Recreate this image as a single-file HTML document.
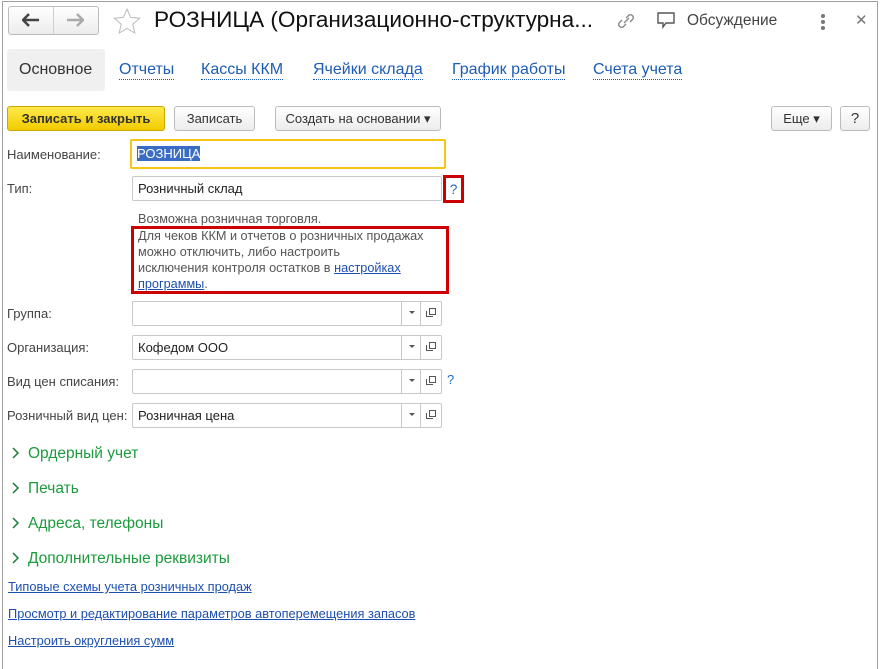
<!DOCTYPE html>
<html style="width:880px;height:669px;overflow:hidden"><head><meta charset="utf-8"><style>
*{box-sizing:border-box;margin:0;padding:0}
body{width:880px;height:669px;background:#fff;font-family:"Liberation Sans",Arial,sans-serif;position:relative;overflow:hidden;color:#333}
.frame{position:absolute;left:2px;top:1px;width:876px;height:690px;border:1px solid #a0a0a0}
.abs{position:absolute}
.btn{position:absolute;border:1px solid #bcbcbc;border-radius:3px;background:linear-gradient(#fff,#ececec);font-size:13px;color:#333;text-align:center;line-height:23px;height:25px}
.lbl{position:absolute;left:7px;font-size:13px;color:#444}
.inp{position:absolute;left:132px;width:310px;height:25px;border:1px solid #c8c8c8;border-radius:2px;background:#fff;font-size:13px;line-height:23px;padding-left:5px;color:#222}
.dd{position:absolute;top:-1px;right:20px;width:20px;height:25px;border-left:1px solid #c8c8c8}
.dd:after{content:"";position:absolute;left:7px;top:10px;border:3px solid transparent;border-top:3px solid #555}
.op{position:absolute;top:-1px;right:0;width:21px;height:25px;border-left:1px solid #c8c8c8}
.op:before{content:"";position:absolute;left:5px;top:10px;width:6px;height:5px;border:1px solid #555;border-top:none;border-right:none}
.op:after{content:"";position:absolute;left:8px;top:7px;width:5px;height:5px;border:1px solid #555}
.tab{position:absolute;top:61px;font-size:16px;color:#1d5cb5;border-bottom:1px dotted #1d5cb5;line-height:18px}
.sec{position:absolute;left:28px;font-size:15.5px;color:#1c9a3c}
.chev{position:absolute;left:12px}
.lnk{position:absolute;left:8px;font-size:12.8px;color:#1d4fb0;text-decoration:underline}
</style></head><body>
<div class="frame"></div>
<div class="btn" style="left:8px;top:6px;width:91px;height:29px"></div>
<div class="abs" style="left:53px;top:7px;width:1px;height:27px;background:#d0d0d0"></div>
<svg class="abs" style="left:22px;top:13px" width="18" height="14"><path d="M1 7h16M7 1L1 7l6 6" stroke="#444" stroke-width="2.5" fill="none"/></svg>
<svg class="abs" style="left:66px;top:13px" width="18" height="14"><path d="M1 7h16M11 1l6 6-6 6" stroke="#aaa" stroke-width="2.5" fill="none"/></svg>
<svg class="abs" style="left:112px;top:7px" width="30" height="28"><path d="M15 2l3.6 8.4 9 .8-6.8 6 2 8.8L15 21.4 7.2 26l2-8.8-6.8-6 9-.8z" stroke="#bbb" fill="none"/></svg>
<div class="abs" style="left:154px;top:7px;font-size:22.6px;color:#111">РОЗНИЦА (Организационно-структурна...</div>
<svg class="abs" style="left:615px;top:11px" width="22" height="20"><path d="M9 12l5-5M7 9l-3 3a3 3 0 004 4l3-3M15 11l3-3a3 3 0 00-4-4l-3 3" stroke="#888" stroke-width="1.4" fill="none"/></svg>
<svg class="abs" style="left:657px;top:11px" width="20" height="20"><path d="M1 2h16v10H9l-3 4v-4H1z" stroke="#555" stroke-width="1.4" fill="none"/></svg>
<div class="abs" style="left:687px;top:12px;font-size:15.5px;color:#444">Обсуждение</div>
<div class="abs" style="left:821px;top:14px;width:4px;height:4px;border-radius:2px;background:#777;box-shadow:0 6px #777,0 12px #777"></div>
<div class="abs" style="left:855px;top:11px;font-size:15px;color:#777">✕</div>
<div class="abs" style="left:7px;top:49px;width:98px;height:42px;background:#f0f0f0;border-radius:3px"></div>
<div class="abs" style="left:19px;top:61px;font-size:16px;color:#333">Основное</div>
<div class="tab" style="left:119px">Отчеты</div>
<div class="tab" style="left:201px">Кассы ККМ</div>
<div class="tab" style="left:313px">Ячейки склада</div>
<div class="tab" style="left:452px">График работы</div>
<div class="tab" style="left:593px">Счета учета</div>
<div class="btn" style="left:7px;top:106px;width:158px;background:linear-gradient(#ffe94a,#f2cc00);border-color:#c8a800;font-weight:bold;color:#333">Записать и закрыть</div>
<div class="btn" style="left:174px;top:106px;width:81px">Записать</div>
<div class="btn" style="left:275px;top:106px;width:166px">Создать на основании ▾</div>
<div class="btn" style="left:771px;top:106px;width:61px">Еще ▾</div>
<div class="btn" style="left:840px;top:106px;width:30px;font-size:15px">?</div>
<div class="lbl" style="top:147px">Наименование:</div>
<div class="inp" style="left:130px;top:139px;width:316px;height:30px;border:2px solid #f5c518;line-height:26px;padding-left:5px"><span style="background:#3b6cc4;color:#fff;">РОЗНИЦА</span></div>
<div class="lbl" style="top:181px">Тип:</div>
<div class="inp" style="top:176px;height:25px">Розничный склад</div>
<div class="abs" style="left:443px;top:175px;width:21px;height:28px;border:3px solid #c00;color:#1d6fc9;font-size:14px;text-align:center;line-height:22px">?</div>
<div class="abs" style="left:138px;top:211px;font-size:12.7px;color:#555;line-height:16px">Возможна розничная торговля.</div>
<div class="abs" style="left:131px;top:226px;width:318px;height:68px;border:3px solid #c00"></div>
<div class="abs" style="left:138px;top:228px;font-size:12.7px;color:#555;line-height:16px">Для чеков ККМ и отчетов о розничных продажах<br>можно отключить, либо настроить<br>исключения контроля остатков в <u style="color:#1d4fb0">настройках</u><br><u style="color:#1d4fb0">программы</u>.</div>
<div class="lbl" style="top:306px">Группа:</div>
<div class="inp" style="top:301px"><div class="dd"></div><div class="op"></div></div>
<div class="lbl" style="top:340px">Организация:</div>
<div class="inp" style="top:335px">Кофедом ООО<div class="dd"></div><div class="op"></div></div>
<div class="lbl" style="top:374px">Вид цен списания:</div>
<div class="inp" style="top:369px"><div class="dd"></div><div class="op"></div></div>
<div class="abs" style="left:447px;top:372px;color:#1d6fc9;font-size:13px">?</div>
<div class="lbl" style="top:408px">Розничный вид цен:</div>
<div class="inp" style="top:403px">Розничная цена<div class="dd"></div><div class="op"></div></div>
<svg class="chev" style="top:447px" width="8" height="12"><path d="M1 1l5 5-5 5" stroke="#1c7a3c" stroke-width="1.5" fill="none"/></svg>
<div class="sec" style="top:445px">Ордерный учет</div>
<svg class="chev" style="top:482px" width="8" height="12"><path d="M1 1l5 5-5 5" stroke="#1c7a3c" stroke-width="1.5" fill="none"/></svg>
<div class="sec" style="top:480px">Печать</div>
<svg class="chev" style="top:517px" width="8" height="12"><path d="M1 1l5 5-5 5" stroke="#1c7a3c" stroke-width="1.5" fill="none"/></svg>
<div class="sec" style="top:515px">Адреса, телефоны</div>
<svg class="chev" style="top:552px" width="8" height="12"><path d="M1 1l5 5-5 5" stroke="#1c7a3c" stroke-width="1.5" fill="none"/></svg>
<div class="sec" style="top:550px">Дополнительные реквизиты</div>
<div class="lnk" style="top:579px">Типовые схемы учета розничных продаж</div>
<div class="lnk" style="top:606px">Просмотр и редактирование параметров автоперемещения запасов</div>
<div class="lnk" style="top:633px">Настроить округления сумм</div>
</body></html>
